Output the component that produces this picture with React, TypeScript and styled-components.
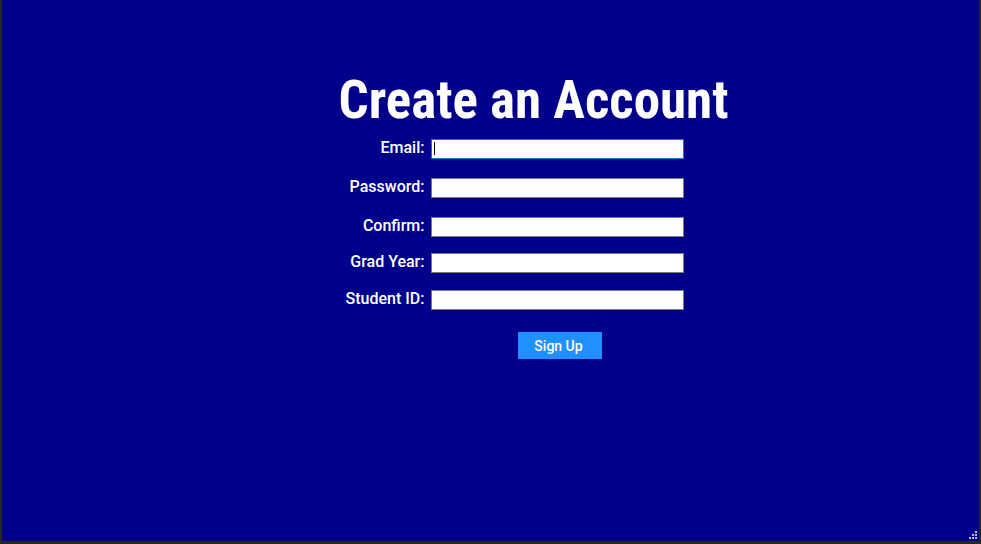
import React from "react";
import styled, { createGlobalStyle } from "styled-components";

const GlobalStyle = createGlobalStyle`
  * { box-sizing: border-box; }
  body { margin: 0; background: #262626; }
`;

const WindowFrame = styled.div`
  position: relative;
  min-height: 100vh;
  border: solid #262626;
  border-width: 0 2px 3px;
  background: #00008b;
  color: #ffffff;
  font-family: Roboto, "Liberation Sans", sans-serif;
`;

const Content = styled.main`
  padding-left: 86px;
`;

const Form = styled.form`
  display: flex;
  flex-direction: column;
  align-items: center;
  width: 400px;
  margin: 0 auto;
  padding-top: 68px;
`;

const Title = styled.h1`
  margin: 0;
  font-family: "Roboto Condensed", "Liberation Sans Narrow", sans-serif;
  font-size: 53px;
  line-height: 64px;
  font-weight: 700;
  white-space: nowrap;
`;

const Fields = styled.div`
  align-self: stretch;
  padding-top: 7px;
`;

const Field = styled.div<{ $space: number }>`
  display: grid;
  grid-template-columns: 91px 253px;
  column-gap: 6px;
  margin-bottom: ${({ $space }) => $space}px;
`;

const Label = styled.label`
  text-align: right;
  font-size: 16px;
  line-height: 17px;
  font-weight: 500;
  white-space: nowrap;
`;

const TextBox = styled.input`
  width: 100%;
  height: 20px;
  padding: 0 2px;
  border: 1px solid #7a7a7a;
  border-radius: 0;
  outline: none;
  background: #ffffff;
  color: #000000;
  font: 14px Roboto, sans-serif;

  &:focus {
    border-color: #0078d7;
  }

  &:focus:placeholder-shown {
    caret-color: transparent;
    background: linear-gradient(#000000, #000000) 2px 2px / 1px 13px no-repeat #ffffff;
  }
`;

const SignUpButton = styled.button`
  width: 84px;
  height: 27px;
  margin-left: 52px;
  padding: 0 2px 0 0;
  border: 0;
  background: #1e90ff;
  color: #ffffff;
  font: 500 14px Roboto, sans-serif;
`;

const Grip = styled.svg`
  position: absolute;
  right: 2px;
  bottom: 2px;
`;

const fields = [
  { id: "email", label: "Email:", type: "email", space: 19 },
  { id: "password", label: "Password:", type: "password", space: 19 },
  { id: "confirm", label: "Confirm:", type: "password", space: 16 },
  { id: "gradYear", label: "Grad Year:", type: "text", space: 17 },
  { id: "studentId", label: "Student ID:", type: "text", space: 22 },
];

const gripDots = [[6, 0], [3, 3], [6, 3], [0, 6], [3, 6], [6, 6]];

export default function App() {
  return (
    <WindowFrame>
      <GlobalStyle />
      <Content>
        <Form onSubmit={(event) => event.preventDefault()}>
          <Title>Create an Account</Title>
          <Fields>
            {fields.map(({ id, label, type, space }) => (
              <Field key={id} $space={space}>
                <Label htmlFor={id}>{label}</Label>
                <TextBox id={id} name={id} type={type} placeholder=" " autoFocus={id === "email"} />
              </Field>
            ))}
          </Fields>
          <SignUpButton type="submit">Sign Up</SignUpButton>
        </Form>
      </Content>
      <Grip width="8" height="8" viewBox="0 0 8 8" shapeRendering="crispEdges" aria-hidden="true">
        {gripDots.map(([x, y]) => (
          <rect key={`${x}-${y}`} x={x} y={y} width="2" height="2" fill="#bfbfbf" />
        ))}
      </Grip>
    </WindowFrame>
  );
}
